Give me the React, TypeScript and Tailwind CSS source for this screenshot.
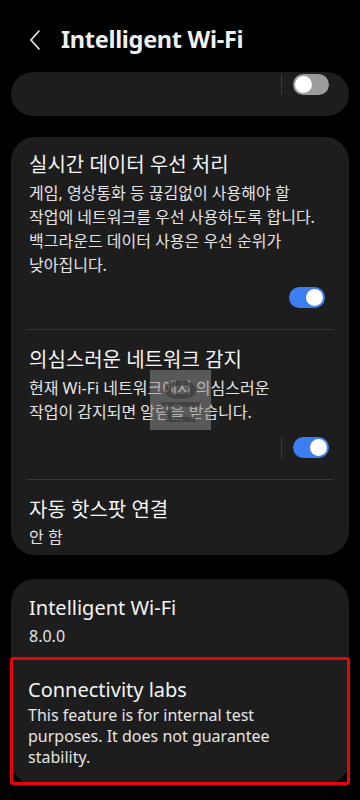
import React from "react";

const FONT = { fontFamily: '"Noto Sans", "Noto Sans CJK KR", sans-serif' };

function Toggle({ on }: { on: boolean }) {
  return (
    <div
      className={
        on
          ? "flex h-[21px] w-[36px] items-center justify-end rounded-full bg-[#3e7df0] px-[2px]"
          : "flex h-[21px] w-[36px] items-center justify-start rounded-full bg-[#9c9c9c] px-[2px]"
      }
    >
      <div className="h-[17px] w-[17px] rounded-full bg-white" />
    </div>
  );
}

export default function App() {
  return (
    <div className="relative min-h-[800px] w-[360px] overflow-hidden bg-black text-[#f2f2f2] break-keep" style={FONT}>
      {/* Header */}
      <div className="flex h-[72px] items-center pl-[29px] pt-[8px]">
        <svg width="14" height="22" viewBox="0 0 14 22" fill="none">
          <path d="M10 2 L2 11 L10 20" stroke="#f0f0f0" strokeWidth="1.6" strokeLinecap="round" strokeLinejoin="round" />
        </svg>
        <h1 className="ml-[18px] text-[23.5px] font-bold tracking-[-0.3px] text-[#efefef]">Intelligent Wi-Fi</h1>
      </div>

      {/* Scrolled-off card */}
      <div className="mx-[11px] flex h-[44px] items-start justify-end rounded-[22px] bg-[#1d1d1d] pr-[20px] pt-[2px]">
        <div className="mr-[11px] h-[21px] w-px bg-[#3a3a3a]" />
        <Toggle on={false} />
      </div>

      {/* Settings card */}
      <div className="mx-[11px] mt-[21px] rounded-[24px] bg-[#1d1d1d] px-[15px] pb-[7px] pt-[14px]">
        <div className="px-[3px]">
          <div className="text-[20px] leading-[28px] text-[#f4f4f4]">실시간 데이터 우선 처리</div>
          <div className="mt-[2px] text-[16px] leading-[24px] text-[#e4e4e4]">
            게임, 영상통화 등 끊김없이 사용해야 할 작업에 네트워크를 우선 사용하도록 합니다. 백그라운드 데이터 사용은 우선 순위가 낮아집니다.
          </div>
          <div className="mt-[10px] flex justify-end pr-[6px]">
            <Toggle on={true} />
          </div>
        </div>
        <div className="mt-[21px] h-px bg-[#363636]" />

        <div className="px-[3px] pt-[16px]">
          <div className="text-[20px] leading-[28px] text-[#f4f4f4]">의심스러운 네트워크 감지</div>
          <div className="mt-[2px] text-[16px] leading-[24px] text-[#e4e4e4]">
            현재 Wi-Fi 네트워크에서 의심스러운
            <br />
            작업이 감지되면 알림을 받습니다.
          </div>
          <div className="mt-[13px] flex items-center justify-end pr-[2px]">
            <div className="mr-[11px] h-[21px] w-px bg-[#3a3a3a]" />
            <Toggle on={true} />
          </div>
        </div>
        <div className="mt-[21px] h-px bg-[#363636]" />

        <div className="px-[3px] pt-[16px]">
          <div className="text-[20px] leading-[28px] text-[#f4f4f4]">자동 핫스팟 연결</div>
          <div className="mt-[2px] text-[16px] leading-[22px] text-[#e4e4e4]">안 함</div>
        </div>
      </div>

      {/* About card */}
      <div className="mx-[11px] mt-[24px] rounded-[24px] bg-[#1d1d1d]">
        <div className="px-[18px] pt-[15px] pb-[10px]">
          <div className="text-[20px] leading-[28px] text-[#f4f4f4]">Intelligent Wi-Fi</div>
          <div className="mt-[3px] text-[16px] leading-[22px] text-[#e4e4e4]">8.0.0</div>
        </div>
        <div className="-mx-[1px] -mb-[6px] rounded-[3px] border-[3px] border-[#e8050a] px-[15px] pb-[14px] pt-[16px]">
          <div className="text-[20px] leading-[28px] text-[#f4f4f4]">Connectivity labs</div>
          <div className="mt-[1px] text-[16px] leading-[21px] text-[#e4e4e4]">
            This feature is for internal test purposes. It does not guarantee stability.
          </div>
        </div>
      </div>

      {/* Watermark overlay */}
      <div className="absolute left-[150px] top-[370px] flex h-[60px] w-[61px] items-center justify-center bg-[#8a8a8a]/55">
        <span className="text-[46px] font-bold leading-none text-[#3a3a3a]/70">은</span>
      </div>
    </div>
  );
}
